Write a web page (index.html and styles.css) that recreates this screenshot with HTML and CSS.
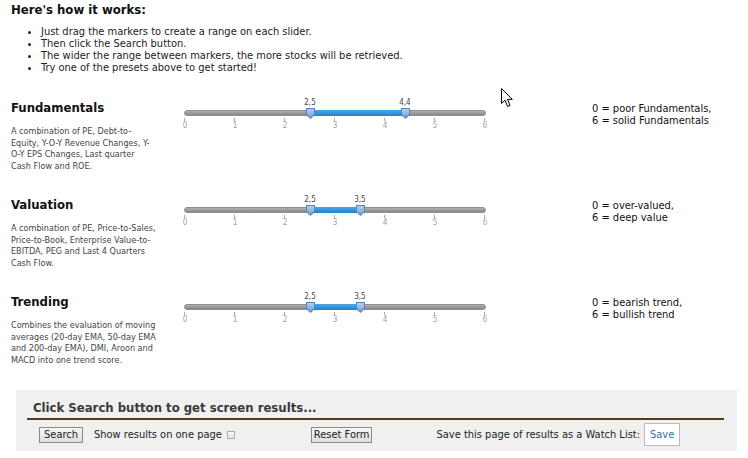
FILE: index.html
```html
<!DOCTYPE html>
<html lang="en">
<head>
  <meta charset="UTF-8" />
  <title>Stock Screener</title>
  <link rel="stylesheet" href="styles.css">
</head>
<body>
  <div class="page">
    <h1 class="intro-title">Here's how it works:</h1>
    <ul class="intro-list">
      <li>Just drag the markers to create a range on each slider.</li>
      <li>Then click the Search button.</li>
      <li>The wider the range between markers, the more stocks will be retrieved.</li>
      <li>Try one of the presets above to get started!</li>
    </ul>

    <div class="criteria">
      <div class="criterion">
        <div class="crit-info">
          <h2>Fundamentals</h2>
          <p>A combination of PE, Debt-to-Equity, Y-O-Y Revenue Changes, Y-O-Y EPS Changes, Last quarter Cash Flow and ROE.</p>
        </div>
        <div class="slider">
          <div class="track">
            <div class="range" style="left: 41.67%; width: 31.67%;"></div>
            <div class="handle" style="left: 41.67%;"><span>2,5</span></div>
            <div class="handle" style="left: 73.33%;"><span>4,4</span></div>
          </div>
          <div class="ticks">
            <div class="tick">0</div><div class="tick">1</div><div class="tick">2</div><div class="tick">3</div><div class="tick">4</div><div class="tick warm">5</div><div class="tick warm">6</div>
          </div>
        </div>
        <div class="crit-scale">0 = poor Fundamentals,<br>6 = solid Fundamentals</div>
      </div>

      <div class="criterion">
        <div class="crit-info">
          <h2>Valuation</h2>
          <p>A combination of PE, Price-to-Sales, Price-to-Book, Enterprise Value-to-EBITDA, PEG and Last 4 Quarters Cash Flow.</p>
        </div>
        <div class="slider">
          <div class="track">
            <div class="range" style="left: 41.67%; width: 16.67%;"></div>
            <div class="handle" style="left: 41.67%;"><span>2,5</span></div>
            <div class="handle" style="left: 58.33%;"><span>3,5</span></div>
          </div>
          <div class="ticks">
            <div class="tick">0</div><div class="tick">1</div><div class="tick">2</div><div class="tick">3</div><div class="tick">4</div><div class="tick warm">5</div><div class="tick warm">6</div>
          </div>
        </div>
        <div class="crit-scale">0 = over-valued,<br>6 = deep value</div>
      </div>

      <div class="criterion">
        <div class="crit-info">
          <h2>Trending</h2>
          <p>Combines the evaluation of moving averages (20-day EMA, 50-day EMA and 200-day EMA), DMI, Aroon and MACD into one trend score.</p>
        </div>
        <div class="slider">
          <div class="track">
            <div class="range" style="left: 41.67%; width: 16.67%;"></div>
            <div class="handle" style="left: 41.67%;"><span>2,5</span></div>
            <div class="handle" style="left: 58.33%;"><span>3,5</span></div>
          </div>
          <div class="ticks">
            <div class="tick">0</div><div class="tick">1</div><div class="tick">2</div><div class="tick">3</div><div class="tick">4</div><div class="tick warm">5</div><div class="tick warm">6</div>
          </div>
        </div>
        <div class="crit-scale">0 = bearish trend,<br>6 = bullish trend</div>
      </div>
    </div>

    <div class="search-panel">
      <h3>Click Search button to get screen results...</h3>
      <div class="search-row">
        <button class="btn">Search</button>
        <label class="one-page">Show results on one page <input type="checkbox"></label>
        <button class="btn reset">Reset Form</button>
        <span class="watch">Save this page of results as a Watch List:</span>
        <button class="save-btn">Save</button>
      </div>
    </div>
  </div>

  <svg class="cursor" width="13" height="20" viewBox="0 0 13 20">
    <path d="M0.5 0.5 L0.5 15.5 L4 12.2 L6.6 18.5 L9 17.5 L6.5 11.4 L11.3 11.4 Z" fill="#fff" stroke="#000" stroke-width="1" stroke-linejoin="miter"/>
  </svg>
</body>
</html>
```

FILE: styles.css
```css
body {
  margin: 0;
  font-family: "DejaVu Sans Condensed", "DejaVu Sans", sans-serif;
  color: #222;
  background: #fff;
}
.page {
  padding: 0 11px;
  width: 726px;
}
.intro-title {
  font-size: 13px;
  line-height: 16px;
  margin: 2px 0 0;
  color: #111;
}
.intro-list {
  margin: 8px 0 0;
  padding-left: 30px;
  font-size: 11px;
  line-height: 12px;
  color: #222;
}
.criteria {
  margin-top: 26px;
}
.criterion {
  display: grid;
  grid-template-columns: 174px 300px 1fr;
  height: 97px;
}
.crit-info h2 {
  font-size: 13px;
  line-height: 16px;
  margin: 0;
  color: #111;
}
.crit-info p {
  margin: 10px 0 0;
  width: 146px;
  font-size: 9px;
  line-height: 11.5px;
  color: #444;
}
.slider {
  padding-top: 10px;
}
.track {
  position: relative;
  height: 4px;
  border-radius: 3px;
  background: linear-gradient(#b0b0b0, #878787);
  border: 1px solid #8f8f8f;
  margin: 0 -1px;
}
.range {
  position: absolute;
  top: -1px;
  height: 6px;
  background: linear-gradient(#4aa8e8, #1e82cc);
}
.handle {
  position: absolute;
  top: -3px;
  width: 9px;
  height: 11px;
  margin-left: -4px;
}
.handle::before,
.handle::after {
  content: "";
  position: absolute;
  clip-path: polygon(0 0, 100% 0, 100% 62%, 50% 100%, 0 62%);
}
.handle::before {
  inset: 0;
  background: #5a84bd;
}
.handle::after {
  inset: 1px 1px 1.5px 1px;
  background: linear-gradient(#b3d0f2, #6e9fdb);
}
.handle span {
  position: absolute;
  bottom: 12px;
  left: -9px;
  width: 26px;
  text-align: center;
  font-size: 8px;
  color: #444;
}
.ticks {
  display: flex;
  justify-content: space-between;
  margin: 2px -4px 0;
}
.tick {
  width: 8px;
  text-align: center;
  font-size: 8px;
  line-height: 9px;
  color: #9aa0a8;
  border-top: 3px solid transparent;
  position: relative;
}
.tick::before {
  content: "";
  position: absolute;
  top: -3px;
  left: 3px;
  width: 1px;
  height: 3px;
  background: #aaa;
}
.tick.warm {
  color: #c3a085;
}
.crit-scale {
  padding: 3px 0 0 107px;
  font-size: 11px;
  line-height: 12px;
  color: #111;
}
.search-panel {
  margin: -1px 0 0 5px;
  background: #f0f0f0;
  padding: 9px 13px 5px 11px;
  width: 697px;
}
.search-panel h3 {
  margin: 0 0 0 6px;
  font-size: 13px;
  line-height: 18px;
  color: #3a3a3a;
  padding-bottom: 1px;
}
.search-row {
  border-top: 2px solid #5b3a17;
  display: flex;
  align-items: center;
  padding: 3px 0 0 12px;
  font-size: 11px;
  color: #222;
}
.btn {
  font-family: inherit;
  font-size: 11px;
  height: 16px;
  padding: 0 4px;
  background: linear-gradient(#f6f6f6, #dedede);
  border: 1px solid #8a8a8a;
  border-radius: 0;
  color: #222;
}
.one-page {
  margin-left: 11px;
  display: flex;
  align-items: center;
}
.one-page input {
  appearance: none;
  width: 8px;
  height: 8px;
  margin: 0 0 0 5px;
  border: 1px solid #aaa;
  background: linear-gradient(#f8f8f8, #e4e4e4);
}
.reset {
  margin-left: 76px;
  padding: 0 2px;
}
.watch {
  margin-left: 64px;
}
.save-btn {
  font-family: inherit;
  font-size: 11px;
  height: 23px;
  margin-left: 4px;
  padding: 0 5px;
  background: #fff;
  border: 1px solid #bbb;
  color: #3b6ea5;
}
.cursor {
  position: absolute;
  left: 501px;
  top: 88px;
}
```
